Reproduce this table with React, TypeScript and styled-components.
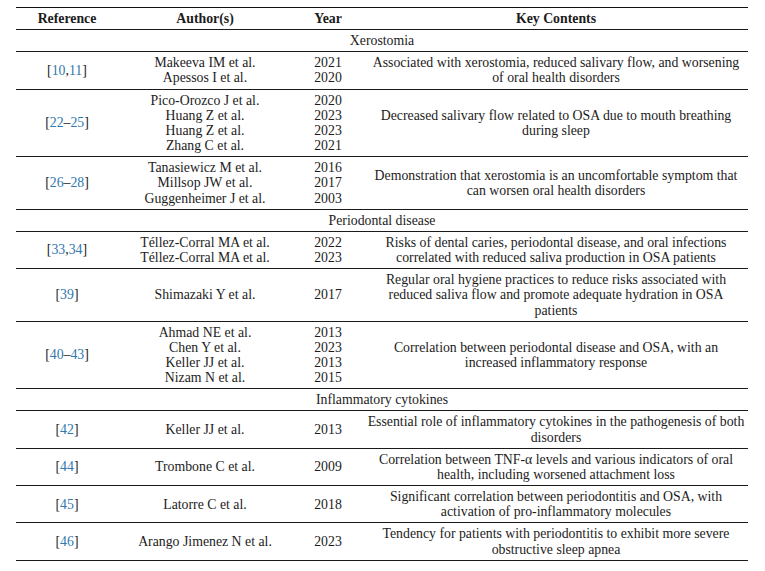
import React from "react";
import styled, { createGlobalStyle } from "styled-components";

const Global = createGlobalStyle`
  html, body { margin: 0; padding: 0; background: #ffffff; }
  body { font-family: "Liberation Serif", "DejaVu Serif", serif; color: #1c1c1c; }
  *, *::before, *::after { box-sizing: border-box; }
`;

const Page = styled.div`
  padding: 7px 17px 0 16px;
`;

const Table = styled.table`
  width: 732px;
  border-collapse: collapse;
  table-layout: fixed;
  font-size: 13.8px;
  line-height: 15.15px;
  border-top: 1px solid #111;
`;

const Row = styled.tr`
  border-bottom: 1px solid #1a1a1a;
`;

const HeadCell = styled.th<{ $w: number }>`
  width: ${(p) => p.$w}px;
  font-weight: bold;
  text-align: center;
  padding: 3px 2px;
  vertical-align: middle;
`;

const Cell = styled.td`
  text-align: center;
  vertical-align: middle;
  padding: 3px 2px;
  white-space: nowrap;
`;

const SectionCell = styled.td`
  text-align: center;
  padding: 3px 2px;
`;

const Ref = styled.span`
  color: #1c1c1c;
`;

const RefNum = styled.span`
  color: #2f78b0;
`;

type Entry = {
  refs: string[];
  sep: string;
  authors: string[];
  years: string[];
  text: string[];
};

type Section = { title: string; entries: Entry[] };

const data: Section[] = [
  {
    title: "Xerostomia",
    entries: [
      {
        refs: ["10", "11"],
        sep: ",",
        authors: ["Makeeva IM et al.", "Apessos I et al."],
        years: ["2021", "2020"],
        text: [
          "Associated with xerostomia, reduced salivary flow, and worsening",
          "of oral health disorders",
        ],
      },
      {
        refs: ["22", "25"],
        sep: "–",
        authors: ["Pico-Orozco J et al.", "Huang Z et al.", "Huang Z et al.", "Zhang C et al."],
        years: ["2020", "2023", "2023", "2021"],
        text: ["Decreased salivary flow related to OSA due to mouth breathing", "during sleep"],
      },
      {
        refs: ["26", "28"],
        sep: "–",
        authors: ["Tanasiewicz M et al.", "Millsop JW et al.", "Guggenheimer J et al."],
        years: ["2016", "2017", "2003"],
        text: [
          "Demonstration that xerostomia is an uncomfortable symptom that",
          "can worsen oral health disorders",
        ],
      },
    ],
  },
  {
    title: "Periodontal disease",
    entries: [
      {
        refs: ["33", "34"],
        sep: ",",
        authors: ["Téllez-Corral MA et al.", "Téllez-Corral MA et al."],
        years: ["2022", "2023"],
        text: [
          "Risks of dental caries, periodontal disease, and oral infections",
          "correlated with reduced saliva production in OSA patients",
        ],
      },
      {
        refs: ["39"],
        sep: "",
        authors: ["Shimazaki Y et al."],
        years: ["2017"],
        text: [
          "Regular oral hygiene practices to reduce risks associated with",
          "reduced saliva flow and promote adequate hydration in OSA",
          "patients",
        ],
      },
      {
        refs: ["40", "43"],
        sep: "–",
        authors: ["Ahmad NE et al.", "Chen Y et al.", "Keller JJ et al.", "Nizam N et al."],
        years: ["2013", "2023", "2013", "2015"],
        text: ["Correlation between periodontal disease and OSA, with an", "increased inflammatory response"],
      },
    ],
  },
  {
    title: "Inflammatory cytokines",
    entries: [
      {
        refs: ["42"],
        sep: "",
        authors: ["Keller JJ et al."],
        years: ["2013"],
        text: ["Essential role of inflammatory cytokines in the pathogenesis of both", "disorders"],
      },
      {
        refs: ["44"],
        sep: "",
        authors: ["Trombone C et al."],
        years: ["2009"],
        text: [
          "Correlation between TNF-α levels and various indicators of oral",
          "health, including worsened attachment loss",
        ],
      },
      {
        refs: ["45"],
        sep: "",
        authors: ["Latorre C et al."],
        years: ["2018"],
        text: [
          "Significant correlation between periodontitis and OSA, with",
          "activation of pro-inflammatory molecules",
        ],
      },
      {
        refs: ["46"],
        sep: "",
        authors: ["Arango Jimenez N et al."],
        years: ["2023"],
        text: [
          "Tendency for patients with periodontitis to exhibit more severe",
          "obstructive sleep apnea",
        ],
      },
    ],
  },
];

const Lines = ({ items }: { items: string[] }) => (
  <>
    {items.map((t, i) => (
      <React.Fragment key={i}>
        {i > 0 && <br />}
        {t}
      </React.Fragment>
    ))}
  </>
);

export default function App() {
  return (
    <Page>
      <Global />
      <Table>
        <thead>
          <Row>
            <HeadCell $w={102}>Reference</HeadCell>
            <HeadCell $w={174}>Author(s)</HeadCell>
            <HeadCell $w={72}>Year</HeadCell>
            <HeadCell $w={384}>Key Contents</HeadCell>
          </Row>
        </thead>
        <tbody>
          {data.map((s) => (
            <React.Fragment key={s.title}>
              <Row>
                <SectionCell colSpan={4}>{s.title}</SectionCell>
              </Row>
              {s.entries.map((e, i) => (
                <Row key={i}>
                  <Cell>
                    <Ref>
                      [
                      {e.refs.map((r, j) => (
                        <React.Fragment key={j}>
                          {j > 0 && e.sep}
                          <RefNum>{r}</RefNum>
                        </React.Fragment>
                      ))}
                      ]
                    </Ref>
                  </Cell>
                  <Cell>
                    <Lines items={e.authors} />
                  </Cell>
                  <Cell>
                    <Lines items={e.years} />
                  </Cell>
                  <Cell>
                    <Lines items={e.text} />
                  </Cell>
                </Row>
              ))}
            </React.Fragment>
          ))}
        </tbody>
      </Table>
    </Page>
  );
}
